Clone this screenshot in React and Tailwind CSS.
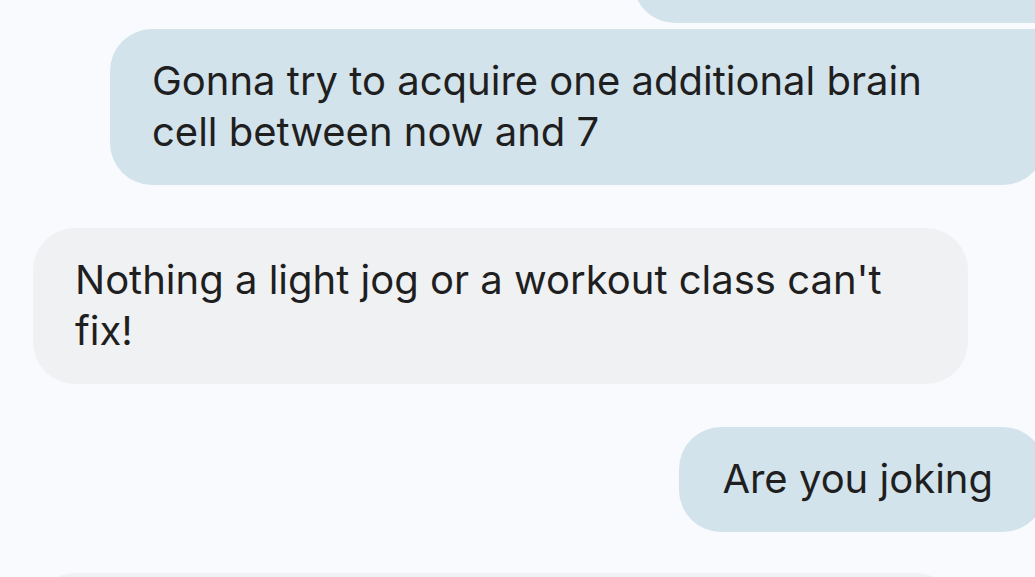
export default function App() {
  const sent = "bg-[#d3e3ec]";
  const recv = "bg-[#f0f1f3]";
  return (
    <div className="w-[1035px] h-[577px] overflow-hidden bg-[#f9fafd] font-['Inter',sans-serif] text-[40px] leading-[51px] text-[#1f1f1f]">
      <div className="flex flex-col">
        <div className={`self-end mr-[-10px] mt-[-77px] h-[100px] w-[412px] rounded-l-[42px] rounded-br-[8px] ${sent}`} />
        <div className={`self-end mr-[-10px] mt-[6px] max-w-[935px] pl-[42px] pr-[60px] pt-[26px] pb-[28px] rounded-[42px] rounded-tr-[8px] ${sent}`}>
          Gonna try to acquire one additional brain cell between now and 7
        </div>
        <div className={`self-start ml-[33px] mt-[43px] max-w-[935px] px-[42px] pt-[26px] pb-[28px] rounded-[42px] ${recv}`}>
          Nothing a light jog or a workout class can't fix!
        </div>
        <div className={`self-end mr-[-10px] mt-[43px] max-w-[935px] pl-[43px] pr-[52px] pt-[26px] pb-[28px] rounded-[42px] ${sent}`}>
          Are you joking
        </div>
        <div className={`self-start ml-[33px] mt-[41px] w-[925px] h-[100px] rounded-[42px] ${recv}`} />
      </div>
    </div>
  );
}
